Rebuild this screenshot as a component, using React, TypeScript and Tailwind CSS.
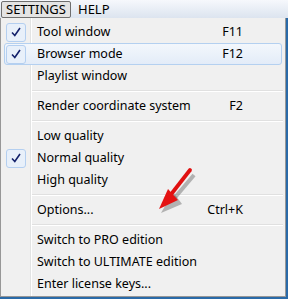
type Item =
  | { kind: "sep" }
  | { kind: "item"; label: string; shortcut?: string; checked?: boolean; hover?: boolean };

const items: Item[] = [
  { kind: "item", label: "Tool window", shortcut: "F11", checked: true },
  { kind: "item", label: "Browser mode", shortcut: "F12", checked: true, hover: true },
  { kind: "item", label: "Playlist window" },
  { kind: "sep" },
  { kind: "item", label: "Render coordinate system", shortcut: "F2" },
  { kind: "sep" },
  { kind: "item", label: "Low quality" },
  { kind: "item", label: "Normal quality", checked: true },
  { kind: "item", label: "High quality" },
  { kind: "sep" },
  { kind: "item", label: "Options...", shortcut: "Ctrl+K" },
  { kind: "sep" },
  { kind: "item", label: "Switch to PRO edition" },
  { kind: "item", label: "Switch to ULTIMATE edition" },
  { kind: "item", label: "Enter license keys..." },
];

function Check() {
  return (
    <svg width="10" height="10" viewBox="0 0 10 10">
      <path d="M1 5.5 L3.8 8.5 L9 1" fill="none" stroke="#14216b" strokeWidth="1.6" />
    </svg>
  );
}

function MenuRow({ item }: { item: Extract<Item, { kind: "item" }> }) {
  return (
    <div className="relative flex items-center h-[22px]">
      {item.hover && (
        <div className="absolute left-[3px] right-[3px] top-0 bottom-0 rounded-[3px] border border-[#b4d0f0] bg-gradient-to-b from-[#f3f7fc] to-[#e3ecf8]" />
      )}
      <div className="relative w-[30px] flex items-center justify-center">
        {item.checked && (
          <div className="w-[20px] h-[19px] rounded-[3px] border border-[#b4cff0] bg-[#e8f0fa] flex items-center justify-center">
            <Check />
          </div>
        )}
      </div>
      <span className="relative ml-[6px] flex-1 text-[12.5px] text-black">{item.label}</span>
      {item.shortcut && (
        <span className="relative mr-[42px] text-[12.5px] text-black">{item.shortcut}</span>
      )}
    </div>
  );
}

export default function App() {
  return (
    <div
      className="relative w-[288px] h-[299px] overflow-hidden bg-[#2a6aa8]"
      style={{ fontFamily: '"Noto Sans", "Open Sans", sans-serif' }}
    >
      {/* Menu bar */}
      <div className="h-[18px] flex items-center bg-gradient-to-b from-[#f6f8fc] to-[#dce4ef]">
        <div className="ml-[1px] h-[17px] w-[70px] flex items-center justify-center border border-[#6f6f6f] rounded-[2px] bg-[#e4e4e4] text-[13px] leading-none text-black">
          SETTINGS
        </div>
        <div className="ml-[7px] text-[13px] leading-none text-black">HELP</div>
      </div>

      {/* Dropdown */}
      <div className="relative w-[286px] h-[279px] border border-t-0 border-[#979797] bg-[#f0f0f0] pt-[3px]">
        <div className="absolute left-[29px] top-0 bottom-0 w-px bg-[#e2e3e3]" />
        <div className="absolute left-[30px] top-0 bottom-0 w-px bg-white" />
        {items.map((item, i) =>
          item.kind === "sep" ? (
            <div key={i} className="h-[8px] flex flex-col justify-center pl-[31px] pr-[2px]">
              <div className="h-px bg-[#e0e0e0]" />
              <div className="h-px bg-white" />
            </div>
          ) : (
            <MenuRow key={i} item={item} />
          )
        )}
      </div>

      {/* Red arrow */}
      <svg className="absolute left-[150px] top-[160px]" width="60" height="60" viewBox="0 0 60 60">
        <path d="M42 12 L20 38" stroke="#555" strokeWidth="4" opacity="0.4" transform="translate(2 3)" />
        <path d="M21 29 L9 50 L30 41 Z" fill="#555" opacity="0.4" transform="translate(2 3)" />
        <path d="M40 10 L19 37" stroke="#e01010" strokeWidth="3.8" strokeLinecap="round" />
        <path d="M18 29 L9 49 L28 40 Z" fill="#e41212" />
      </svg>
    </div>
  );
}
